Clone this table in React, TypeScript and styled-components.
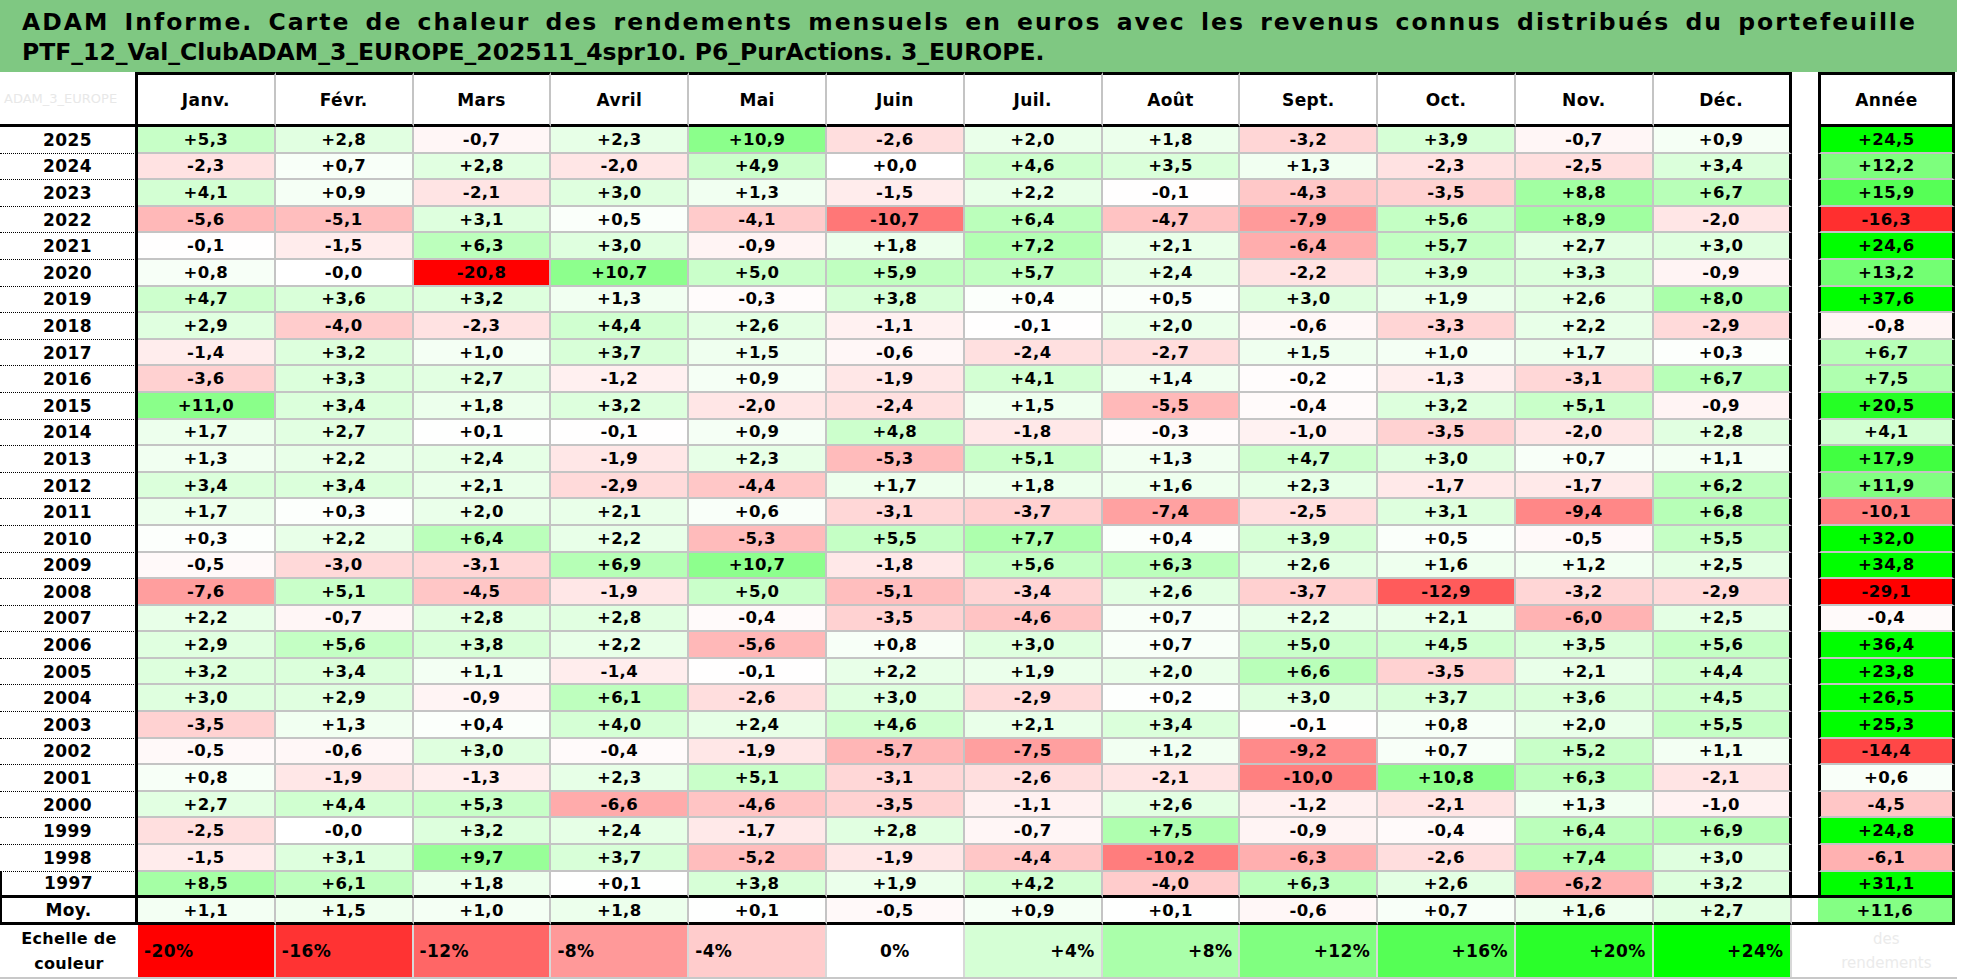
import React from 'react'
import styled, { createGlobalStyle } from 'styled-components'

const MONTHS = ['Janv.', 'Févr.', 'Mars', 'Avril', 'Mai', 'Juin', 'Juil.', 'Août', 'Sept.', 'Oct.', 'Nov.', 'Déc.']

// year, 12 monthly returns, yearly return
const ROWS: [string, string][] = [
  ['2025', '+5,3 +2,8 -0,7 +2,3 +10,9 -2,6 +2,0 +1,8 -3,2 +3,9 -0,7 +0,9 +24,5'],
  ['2024', '-2,3 +0,7 +2,8 -2,0 +4,9 +0,0 +4,6 +3,5 +1,3 -2,3 -2,5 +3,4 +12,2'],
  ['2023', '+4,1 +0,9 -2,1 +3,0 +1,3 -1,5 +2,2 -0,1 -4,3 -3,5 +8,8 +6,7 +15,9'],
  ['2022', '-5,6 -5,1 +3,1 +0,5 -4,1 -10,7 +6,4 -4,7 -7,9 +5,6 +8,9 -2,0 -16,3'],
  ['2021', '-0,1 -1,5 +6,3 +3,0 -0,9 +1,8 +7,2 +2,1 -6,4 +5,7 +2,7 +3,0 +24,6'],
  ['2020', '+0,8 -0,0 -20,8 +10,7 +5,0 +5,9 +5,7 +2,4 -2,2 +3,9 +3,3 -0,9 +13,2'],
  ['2019', '+4,7 +3,6 +3,2 +1,3 -0,3 +3,8 +0,4 +0,5 +3,0 +1,9 +2,6 +8,0 +37,6'],
  ['2018', '+2,9 -4,0 -2,3 +4,4 +2,6 -1,1 -0,1 +2,0 -0,6 -3,3 +2,2 -2,9 -0,8'],
  ['2017', '-1,4 +3,2 +1,0 +3,7 +1,5 -0,6 -2,4 -2,7 +1,5 +1,0 +1,7 +0,3 +6,7'],
  ['2016', '-3,6 +3,3 +2,7 -1,2 +0,9 -1,9 +4,1 +1,4 -0,2 -1,3 -3,1 +6,7 +7,5'],
  ['2015', '+11,0 +3,4 +1,8 +3,2 -2,0 -2,4 +1,5 -5,5 -0,4 +3,2 +5,1 -0,9 +20,5'],
  ['2014', '+1,7 +2,7 +0,1 -0,1 +0,9 +4,8 -1,8 -0,3 -1,0 -3,5 -2,0 +2,8 +4,1'],
  ['2013', '+1,3 +2,2 +2,4 -1,9 +2,3 -5,3 +5,1 +1,3 +4,7 +3,0 +0,7 +1,1 +17,9'],
  ['2012', '+3,4 +3,4 +2,1 -2,9 -4,4 +1,7 +1,8 +1,6 +2,3 -1,7 -1,7 +6,2 +11,9'],
  ['2011', '+1,7 +0,3 +2,0 +2,1 +0,6 -3,1 -3,7 -7,4 -2,5 +3,1 -9,4 +6,8 -10,1'],
  ['2010', '+0,3 +2,2 +6,4 +2,2 -5,3 +5,5 +7,7 +0,4 +3,9 +0,5 -0,5 +5,5 +32,0'],
  ['2009', '-0,5 -3,0 -3,1 +6,9 +10,7 -1,8 +5,6 +6,3 +2,6 +1,6 +1,2 +2,5 +34,8'],
  ['2008', '-7,6 +5,1 -4,5 -1,9 +5,0 -5,1 -3,4 +2,6 -3,7 -12,9 -3,2 -2,9 -29,1'],
  ['2007', '+2,2 -0,7 +2,8 +2,8 -0,4 -3,5 -4,6 +0,7 +2,2 +2,1 -6,0 +2,5 -0,4'],
  ['2006', '+2,9 +5,6 +3,8 +2,2 -5,6 +0,8 +3,0 +0,7 +5,0 +4,5 +3,5 +5,6 +36,4'],
  ['2005', '+3,2 +3,4 +1,1 -1,4 -0,1 +2,2 +1,9 +2,0 +6,6 -3,5 +2,1 +4,4 +23,8'],
  ['2004', '+3,0 +2,9 -0,9 +6,1 -2,6 +3,0 -2,9 +0,2 +3,0 +3,7 +3,6 +4,5 +26,5'],
  ['2003', '-3,5 +1,3 +0,4 +4,0 +2,4 +4,6 +2,1 +3,4 -0,1 +0,8 +2,0 +5,5 +25,3'],
  ['2002', '-0,5 -0,6 +3,0 -0,4 -1,9 -5,7 -7,5 +1,2 -9,2 +0,7 +5,2 +1,1 -14,4'],
  ['2001', '+0,8 -1,9 -1,3 +2,3 +5,1 -3,1 -2,6 -2,1 -10,0 +10,8 +6,3 -2,1 +0,6'],
  ['2000', '+2,7 +4,4 +5,3 -6,6 -4,6 -3,5 -1,1 +2,6 -1,2 -2,1 +1,3 -1,0 -4,5'],
  ['1999', '-2,5 -0,0 +3,2 +2,4 -1,7 +2,8 -0,7 +7,5 -0,9 -0,4 +6,4 +6,9 +24,8'],
  ['1998', '-1,5 +3,1 +9,7 +3,7 -5,2 -1,9 -4,4 -10,2 -6,3 -2,6 +7,4 +3,0 -6,1'],
  ['1997', '+8,5 +6,1 +1,8 +0,1 +3,8 +1,9 +4,2 -4,0 +6,3 +2,6 -6,2 +3,2 +31,1'],
]
const AVERAGE = '+1,1 +1,5 +1,0 +1,8 +0,1 -0,5 +0,9 +0,1 -0,6 +0,7 +1,6 +2,7 +11,6'

const SCALE = [-20, -16, -12, -8, -4, 0, 4, 8, 12, 16, 20, 24]

const num = (s: string) => parseFloat(s.replace(',', '.'))

// white at 0, full red at -20, full green at +24
const heat = (v: number) => {
  if (v >= 0) {
    const c = Math.round(255 * (1 - Math.min(v / 24, 1)))
    return `rgb(${c},255,${c})`
  }
  const c = Math.round(255 * (1 - Math.min(-v / 20, 1)))
  return `rgb(255,${c},${c})`
}

const GRID = '138px repeat(12, 137.8px) 26px 137.6px'
const GREY = '2px solid #c4c4c4'
const BLACK = '3px solid #000'

const GlobalStyle = createGlobalStyle`
  body {
    margin: 0;
    background: #fff;
    font-family: "DejaVu Sans", Verdana, sans-serif;
  }
`

const Sheet = styled.div`
  width: 1957px;
`

const Banner = styled.div`
  box-sizing: border-box;
  height: 72px;
  padding: 7px 0 0 22px;
  background: #7fc882;
  color: #000;
  font-size: 23.5px;
  font-weight: 700;
  line-height: 30px;
  white-space: nowrap;
`

// the first title line is spread over the whole banner, like the wrapped sheet cell
const TitleLine = styled.div<{ $spread?: boolean }>`
  width: ${(p) => (p.$spread ? '1895px' : 'auto')};
  letter-spacing: ${(p) => (p.$spread ? '2px' : '0')};
  text-align: ${(p) => (p.$spread ? 'justify' : 'left')};
  text-align-last: ${(p) => (p.$spread ? 'justify' : 'auto')};
`

const Row = styled.div<{ $h: number }>`
  display: grid;
  grid-template-columns: ${GRID};
  height: ${(p) => p.$h}px;
`

const LegendRow = styled(Row)`
  box-sizing: border-box;
  border-bottom: 2px solid #c8c8c8;
`

const Cell = styled.div`
  box-sizing: border-box;
  display: flex;
  align-items: center;
  justify-content: center;
  overflow: hidden;
  white-space: nowrap;
  color: #000;
  font-size: 16.5px;
  font-weight: 700;
  letter-spacing: 0.4px;
`

const CornerHead = styled(Cell)`
  justify-content: flex-start;
  padding-left: 4px;
  border-right: ${BLACK};
  border-bottom: ${BLACK};
  color: #e8e8e8;
  font-size: 13px;
  font-weight: 400;
  letter-spacing: 0;
`

const MonthHead = styled(Cell)<{ $dec?: boolean }>`
  font-size: 17px;
  border-top: ${BLACK};
  border-bottom: ${BLACK};
  border-right: ${(p) => (p.$dec ? BLACK : GREY)};
`

const TotalHead = styled(Cell)`
  font-size: 17px;
  border: ${BLACK};
`

const YearCell = styled(Cell)<{ $last?: boolean; $edge?: boolean }>`
  font-size: 17px;
  border-right: ${BLACK};
  border-left: ${(p) => (p.$edge ? '2px solid #000' : 'none')};
  border-bottom: ${(p) => (p.$last ? BLACK : '1px dotted #000')};
`

const ValueCell = styled(Cell)<{ $bg: string; $dec?: boolean; $last?: boolean }>`
  background: ${(p) => p.$bg};
  border-right: ${(p) => (p.$dec ? BLACK : GREY)};
  border-bottom: ${(p) => (p.$last ? BLACK : GREY)};
`

const Gap = styled.div<{ $last?: boolean }>`
  box-sizing: border-box;
  border-bottom: ${(p) => (p.$last ? BLACK : 'none')};
`

const TotalCell = styled(Cell)<{ $bg: string; $last?: boolean; $open?: boolean }>`
  background: ${(p) => p.$bg};
  border-left: ${(p) => (p.$open ? 'none' : BLACK)};
  border-right: ${BLACK};
  border-bottom: ${(p) => (p.$last ? BLACK : GREY)};
`

const LegendLabel = styled.div`
  display: flex;
  flex-direction: column;
  align-items: center;
  justify-content: center;
  font-size: 16px;
  font-weight: 700;
  line-height: 25px;
  letter-spacing: 0.3px;
`

const Swatch = styled(Cell)<{ $bg: string; $align: string }>`
  justify-content: ${(p) => p.$align};
  padding: 0 6px;
  font-size: 17px;
  background: ${(p) => p.$bg};
  border-right: 2px solid #d8d8d8;
`

const FaintNote = styled.div`
  display: flex;
  flex-direction: column;
  align-items: center;
  justify-content: center;
  color: #ebebeb;
  font-size: 15px;
  line-height: 24px;
`

const DataRow: React.FC<{ year: string; line: string; last?: boolean; edge?: boolean }> = ({ year, line, last, edge }) => {
  const values = line.split(' ')
  const total = values[12]
  return (
    <Row $h={26.6}>
      <YearCell $last={last} $edge={edge}>{year}</YearCell>
      {values.slice(0, 12).map((v, i) => (
        <ValueCell key={i} $bg={heat(num(v))} $dec={i === 11} $last={last}>
          {v}
        </ValueCell>
      ))}
      <Gap $last={last} />
      <TotalCell $bg={heat(num(total))} $last={last}>
        {total}
      </TotalCell>
    </Row>
  )
}

const App: React.FC = () => {
  const avg = AVERAGE.split(' ')
  return (
    <Sheet>
      <GlobalStyle />
      <Banner>
        <TitleLine $spread>
          ADAM Informe. Carte de chaleur des rendements mensuels en euros avec les revenus connus distribués du portefeuille
        </TitleLine>
        <TitleLine>PTF_12_Val_ClubADAM_3_EUROPE_202511_4spr10. P6_PurActions. 3_EUROPE.</TitleLine>
      </Banner>

      <Row $h={55}>
        <CornerHead>ADAM_3_EUROPE</CornerHead>
        {MONTHS.map((m, i) => (
          <MonthHead key={m} $dec={i === 11}>
            {m}
          </MonthHead>
        ))}
        <Gap />
        <TotalHead>Année</TotalHead>
      </Row>

      {ROWS.map(([year, line], i) => (
        <DataRow key={year} year={year} line={line} last={i === ROWS.length - 1} edge={i === ROWS.length - 1} />
      ))}

      <Row $h={26.6}>
        <YearCell $last $edge>Moy.</YearCell>
        {avg.slice(0, 12).map((v, i) => (
          <ValueCell key={i} $bg={heat(num(v))} $last>
            {v}
          </ValueCell>
        ))}
        <Gap $last />
        <TotalCell $bg={heat(num(avg[12]))} $last $open>
          {avg[12]}
        </TotalCell>
      </Row>

      <LegendRow $h={54}>
        <LegendLabel>
          <span>Echelle de</span>
          <span>couleur</span>
        </LegendLabel>
        {SCALE.map((s) => (
          <Swatch key={s} $bg={heat(s)} $align={s < 0 ? 'flex-start' : s === 0 ? 'center' : 'flex-end'}>
            {s > 0 ? `+${s}%` : `${s}%`}
          </Swatch>
        ))}
        <Gap />
        <FaintNote>
          <span>des</span>
          <span>rendements</span>
        </FaintNote>
      </LegendRow>
    </Sheet>
  )
}

export default App
